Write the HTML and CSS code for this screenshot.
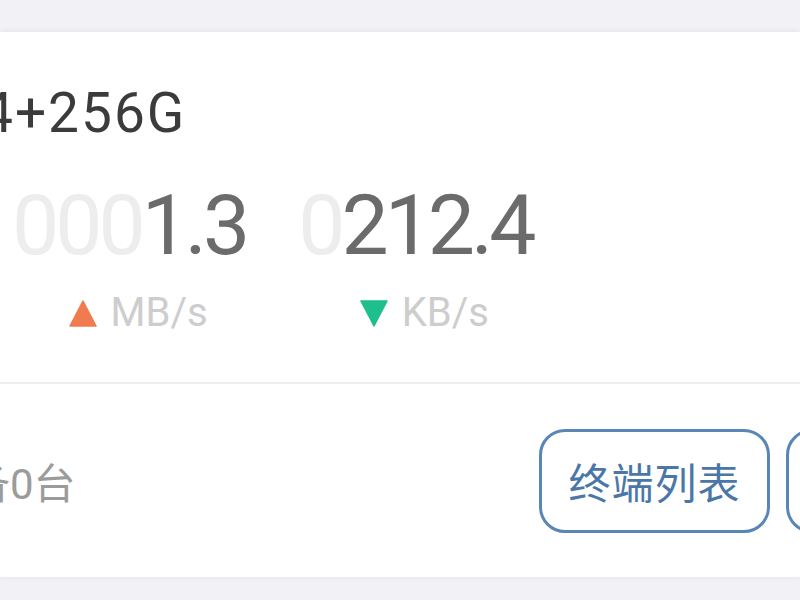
FILE: index.html
```html
<!DOCTYPE html>
<html lang="zh-CN">
<head>
<meta charset="utf-8">
<title>Device card</title>
<link rel="stylesheet" href="styles.css">
</head>
<body>
<div class="page">
  <section class="card">
    <div class="spec">4+256G</div>
    <div class="speeds">
      <div class="speed">
        <div class="value"><span class="ghost">000</span><span class="num">1.3</span></div>
        <div class="unit">
          <svg class="tri" width="28" height="27" viewBox="0 0 28 27"><polygon points="14,1 27,26 1,26" fill="#f07b4f" stroke="#f07b4f" stroke-width="1.5" stroke-linejoin="round"/></svg>
          <span>MB/s</span>
        </div>
      </div>
      <div class="speed">
        <div class="value"><span class="ghost">0</span><span class="num">212.4</span></div>
        <div class="unit">
          <svg class="tri" width="28" height="27" viewBox="0 0 28 27"><polygon points="1,1 27,1 14,26" fill="#1dbf8c" stroke="#1dbf8c" stroke-width="1.5" stroke-linejoin="round"/></svg>
          <span>KB/s</span>
        </div>
      </div>
    </div>
    <div class="divider"></div>
    <div class="footer">
      <div class="count">备0台</div>
      <div class="actions">
        <button class="btn">终端列表</button>
        <button class="btn btn-cut"></button>
      </div>
    </div>
  </section>
</div>
</body>
</html>
```

FILE: styles.css
```css
* { box-sizing: border-box; }
html, body { margin: 0; padding: 0; }
body {
  width: 800px;
  height: 600px;
  overflow: hidden;
  background: #f1f1f6;
  font-family: Roboto, "Noto Sans CJK SC", sans-serif;
}
.page {
  padding-top: 32px;
  height: 600px;
}
.card {
  background: #ffffff;
  height: 545px;
  box-shadow: 0 -3px 4px rgba(0, 0, 0, 0.03), 0 2px 3px rgba(0, 0, 0, 0.03);
  display: flex;
  flex-direction: column;
  padding-top: 54px;
  overflow: hidden;
}
.spec {
  font-size: 55px;
  line-height: 54px;
  letter-spacing: 2px;
  color: #3b3b3b;
  margin-left: -18px;
  white-space: nowrap;
}
.speeds {
  display: flex;
  gap: 52px;
  margin-top: 44px;
  padding-left: 12px;
}
.speed {
  display: flex;
  flex-direction: column;
  align-items: center;
}
.value {
  font-size: 84px;
  line-height: 84px;
  letter-spacing: -4px;
  white-space: nowrap;
}
.ghost { color: #ededed; }
.num { color: #6b6b6b; }
.unit {
  display: flex;
  align-items: center;
  gap: 14px;
  margin-top: 25px;
  margin-left: 18px;
  font-size: 40px;
  line-height: 40px;
  color: #cdcdcd;
}
.divider {
  height: 2px;
  background: #eeeeee;
  margin-top: 49px;
}
.footer {
  flex: 1;
  display: flex;
  align-items: center;
  justify-content: space-between;
}
.count {
  font-size: 42px;
  color: #9b9b9b;
  margin-left: -32px;
  white-space: nowrap;
}
.actions {
  display: flex;
  gap: 16px;
  margin-right: -42px;
}
.btn {
  width: 231px;
  height: 104px;
  border: 3px solid #5a86b5;
  border-radius: 26px;
  background: #ffffff;
  color: #4a77a8;
  font-family: "Noto Sans CJK SC", sans-serif;
  font-size: 42px;
  letter-spacing: 1px;
  padding: 0;
}
.btn-cut { width: 56px; }
```
